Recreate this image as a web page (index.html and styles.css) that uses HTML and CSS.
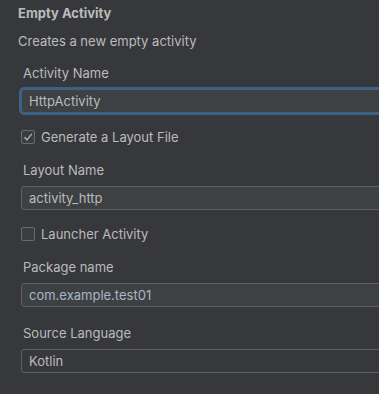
FILE: index.html
```html
<!DOCTYPE html>
<html lang="en">
<head>
    <meta charset="UTF-8">
    <title>Empty Activity</title>
    <link rel="stylesheet" href="styles.css">
</head>
<body>
    <!-- Header of the template page -->
    <div class="header">
        <div class="title">Empty Activity</div>
        <div class="desc">Creates a new empty activity</div>
    </div>

    <!-- Template parameters -->
    <div class="form">
        <div class="field">
            <label class="label">Activity Name</label>
            <div class="input focused">HttpActivity</div>
        </div>

        <div class="check">
            <span class="box">
                <svg width="12" height="12" viewBox="0 0 12 12"><path d="M2.5 6.2 L5 8.8 L9.8 2.8" fill="none" stroke="#b8b8b8" stroke-width="1.3"/></svg>
            </span>
            <span>Generate a Layout File</span>
        </div>

        <div class="field">
            <label class="label">Layout Name</label>
            <div class="input">activity_http</div>
        </div>

        <div class="check">
            <span class="box"></span>
            <span>Launcher Activity</span>
        </div>

        <div class="field">
            <label class="label">Package name</label>
            <div class="input package">com.example.test01</div>
        </div>

        <div class="field">
            <label class="label">Source Language</label>
            <div class="input combo">Kotlin</div>
        </div>
    </div>
</body>
</html>
```

FILE: styles.css
```css
/* Dark IDE dialog panel */
html, body {
    overflow: hidden;
}
body {
    margin: 0;
    background-color: #37383b;
    color: #bbbbbb;
    font-family: Inter, "Liberation Sans", Arial, sans-serif;
    font-size: 13px;
    line-height: 16px;
}
.header {
    padding: 5px 18px 0 18px;
}
.title {
    font-weight: bold;
}
.desc {
    margin-top: 12px;
}
.form {
    padding-left: 21px;
    margin-top: 16px;
}
.field {
    display: flex;
    flex-direction: column;
}
.field + .field {
    margin-top: 18px;
}
.label {
    padding-left: 2px;
}
.input {
    width: 420px;
    height: 22px;
    margin-top: 8px;
    padding-left: 7px;
    line-height: 22px;
    background-color: #3e4143;
    border: 1px solid #5d5f61;
    border-radius: 3px;
}
.input.focused {
    border-color: #3d6185;
    box-shadow: 0 0 0 2px #3d6185;
}
.input.package {
    color: #a9b6c4;
}
.input.combo {
    background-color: #37383b;
}
.check {
    display: flex;
    align-items: center;
    gap: 6px;
    height: 16px;
    margin: 16px 0 17px 0;
}
.box {
    width: 12px;
    height: 12px;
    border: 1px solid #696b6d;
    border-radius: 2px;
    background-color: #3b3e40;
    display: flex;
    align-items: center;
    justify-content: center;
}
```
